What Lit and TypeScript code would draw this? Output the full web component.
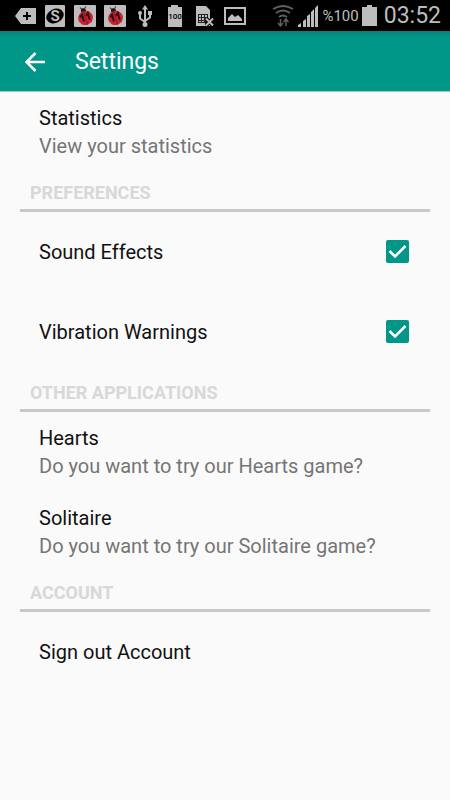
import { LitElement, html, css, svg, nothing } from "lit";
import { customElement, property, state } from "lit/decorators.js";

interface Item {
  title: string;
  summary?: string;
  setting?: "sound" | "vibration";
}

interface Section {
  heading?: string;
  items: Item[];
}

const SECTIONS: Section[] = [
  { items: [{ title: "Statistics", summary: "View your statistics" }] },
  {
    heading: "PREFERENCES",
    items: [
      { title: "Sound Effects", setting: "sound" },
      { title: "Vibration Warnings", setting: "vibration" },
    ],
  },
  {
    heading: "OTHER APPLICATIONS",
    items: [
      { title: "Hearts", summary: "Do you want to try our Hearts game?" },
      { title: "Solitaire", summary: "Do you want to try our Solitaire game?" },
    ],
  },
  { heading: "ACCOUNT", items: [{ title: "Sign out Account" }] },
];

const bug = svg`
  <rect width="22" height="22" rx="1" fill="#bdbdbd"/>
  <g transform="rotate(-16 11 11)">
    <path d="M10 4L8.500 1.500M12.500 4l2-2" stroke="#333" stroke-width="1" fill="none"/>
    <circle cx="11" cy="5.500" r="2.500" fill="#1c1a1c"/>
    <ellipse cx="11" cy="13" rx="7.500" ry="7" fill="#cb2130"/>
    <path d="M11 6v14" stroke="#8f1620" stroke-width="1"/>
    <path d="M6 11l2.500-2v7M12 11l2.500-2v7" stroke="#2a1416" stroke-width="2" fill="none"/>
  </g>`;

/* The notification and system icons along the top of the screen. */
@customElement("status-bar")
export class StatusBar extends LitElement {
  static styles = css`
    :host {
      display: flex;
      align-items: center;
      justify-content: space-between;
      height: 31px;
      padding: 0 9px 0 15px;
      background: #000;
      color: #bdbdbd;
      font-family: Roboto, "Noto Sans", sans-serif;
    }
    .group {
      display: flex;
      align-items: center;
      gap: 8px;
    }
    .system {
      gap: 3px;
    }
    svg {
      display: block;
      flex: none;
    }
    .level {
      font-size: 15px;
      line-height: 20px;
    }
    .clock {
      font-size: 23px;
      line-height: 28px;
      margin-left: 4px;
    }
    .small {
      font: 500 8px Roboto, sans-serif;
    }
    .letter {
      font: 700 15px Roboto, sans-serif;
    }
  `;

  render() {
    return html`
      <div class="group">
        <svg width="22" height="22" viewBox="0 0 22 22" aria-hidden="true">
          <path d="M0 11l6-8h15v16H6z" fill="#bdbdbd"/>
          <path d="M12 7v8M8 11h8" stroke="#000" stroke-width="2"/>
        </svg>
        <svg width="21" height="22" viewBox="0 0 21 22" aria-hidden="true">
          <rect width="20" height="22" rx="1" fill="#bdbdbd"/>
          <ellipse cx="10" cy="11" rx="9" ry="7" transform="rotate(-25 10 11)" fill="#000"/>
          <text class="letter" x="10" y="16" text-anchor="middle" fill="#bdbdbd">S</text>
        </svg>
        <svg width="22" height="22" viewBox="0 0 22 22" aria-hidden="true">${bug}</svg>
        <svg width="22" height="22" viewBox="0 0 22 22" aria-hidden="true">${bug}</svg>
        <svg width="22" height="22" viewBox="0 0 22 22" aria-hidden="true">
          <path d="M11 3v17M11 17L6 13.500V8M11 16L16 12.500V8" fill="none" stroke="#bdbdbd" stroke-width="2"/>
          <path d="M11 0l3 4.500H8z" fill="#bdbdbd"/>
          <circle cx="11" cy="19.500" r="2.500" fill="#bdbdbd"/>
          <circle cx="6" cy="8" r="2" fill="#bdbdbd"/>
          <path d="M14 6h4v4h-4z" fill="#bdbdbd"/>
        </svg>
        <svg width="22" height="22" viewBox="0 0 22 22" aria-hidden="true">
          <path d="M7 0h7v2h4v20H4V2h3z" fill="#bdbdbd"/>
          <text class="small" x="11" y="14" text-anchor="middle" fill="#000">100</text>
        </svg>
        <svg width="22" height="22" viewBox="0 0 22 22" aria-hidden="true">
          <path d="M2 1h10l4 4v16H2z" fill="#bdbdbd"/>
          <path d="M4 9h10v9H4z" fill="#222"/>
          <path d="M5 10h2v2H5zM8 10h2v2H8zM11 10h2v2h-2zM5 13h2v2H5zM8 13h2v2H8zM5 16h2v1H5zM8 16h2v1H8z" fill="#bdbdbd"/>
          <path d="M12 13.500l7 7M19 13.500l-7 7" stroke="#000" stroke-width="4"/>
          <path d="M12 13.500l7 7M19 13.500l-7 7" stroke="#bdbdbd" stroke-width="2"/>
        </svg>
        <svg width="22" height="22" viewBox="0 0 22 22" aria-hidden="true">
          <path d="M1 3h20v16H1z" fill="none" stroke="#bdbdbd" stroke-width="2"/>
          <path d="M4 16v-3l4-4 3 3 3-2 4 4v2z" fill="#bdbdbd"/>
        </svg>
      </div>
      <div class="group system">
        <svg width="22" height="22" viewBox="0 0 22 22" aria-hidden="true">
          <path d="M1 4q10-6 20 0M4 8q7-5 14 0M7 12q4-3 8 0" fill="none" stroke="#606060" stroke-width="2"/>
          <path d="M8.500 14v7M6 18l2.500 3 2.500-3M14 21v-7M11.500 17l2.500-3 2.500 3" fill="none" stroke="#606060" stroke-width="1.500"/>
        </svg>
        <svg width="22" height="22" viewBox="0 0 22 22" aria-hidden="true">
          <path d="M1 20l3-2v4H1zM6 16l3-2v8H6zM10 11l3-2v13h-3zM14 7l3-3v18h-3zM18 3l3-3v22h-3z" fill="#bdbdbd"/>
        </svg>
        <span class="level">%100</span>
        <svg width="15" height="22" viewBox="0 0 15 22" aria-hidden="true">
          <path d="M5 0h5v2h5v19H0V2h5z" fill="#bdbdbd"/>
        </svg>
        <span class="clock">03:52</span>
      </div>
    `;
  }
}

/* One line of the settings list: plain, with a summary, or with a tick box. */
@customElement("settings-row")
export class SettingsRow extends LitElement {
  @property() title = "";
  @property() summary = "";
  @property({ type: Boolean }) checkable = false;
  @property({ type: Boolean }) checked = false;

  static styles = css`
    :host {
      display: block;
    }
    .row {
      box-sizing: border-box;
      display: flex;
      align-items: center;
      justify-content: space-between;
      width: 100%;
      min-height: 80px;
      padding: 0 41px 0 39px;
      border: 0;
      background: none;
      color: #111;
      text-align: left;
      font: 20px/28px Roboto, "Noto Sans", sans-serif;
    }
    .title,
    .summary {
      display: block;
    }
    .summary {
      color: #757575;
    }
    .box {
      appearance: none;
      box-sizing: border-box;
      width: 23px;
      height: 23px;
      margin: 0;
      border: 2px solid #757575;
      border-radius: 2px;
    }
    .tick {
      display: grid;
      place-items: center;
      padding-bottom: 1px;
    }
    .tick > * {
      grid-area: 1 / 1;
    }
    .box:checked {
      border-color: #009688;
      background: #009688;
    }
    .box:not(:checked) + .mark {
      display: none;
    }
    .mark {
      pointer-events: none;
    }
  `;

  private toggle(event: Event) {
    this.checked = (event.target as HTMLInputElement).checked;
  }

  render() {
    if (this.checkable) {
      return html`
        <label class="row">
          <span class="title">${this.title}</span>
          <span class="tick">
            <input class="box" type="checkbox" .checked=${this.checked} @change=${this.toggle} />
            <svg class="mark" width="23" height="23" viewBox="0 0 23 23" aria-hidden="true">
              <path d="M3.500 11l5.500 5.500L19.500 6" fill="none" stroke="#fff" stroke-width="2.500"/>
            </svg>
          </span>
        </label>
      `;
    }
    return html`
      <button class="row" type="button">
        <span>
          <span class="title">${this.title}</span>
          ${this.summary ? html`<span class="summary">${this.summary}</span>` : nothing}
        </span>
      </button>
    `;
  }
}

@customElement("app-root")
export class AppRoot extends LitElement {
  @state() private sections = SECTIONS;

  static styles = css`
    :host {
      display: block;
      min-height: 100vh;
      background: #fafafa;
      font-family: Roboto, "Noto Sans", sans-serif;
    }
    .bar {
      box-sizing: border-box;
      display: flex;
      align-items: center;
      gap: 25px;
      height: 61px;
      padding: 2px 20px 0;
      border-bottom: 1px solid #8fcfc8;
      background: linear-gradient(#058377, #009688 6px);
      color: #fff;
    }
    .back {
      display: grid;
      place-items: center;
      width: 30px;
      height: 30px;
      padding: 0;
      border: 0;
      background: none;
    }
    .name {
      margin: 0;
      font-size: 23px;
      font-weight: 400;
      line-height: 32px;
    }
    .heading {
      box-sizing: border-box;
      height: 40px;
      margin: 0 20px;
      padding: 6px 10px 0;
      border-bottom: 3px solid #c8c8c8;
      color: #d8d8d8;
      font-size: 18px;
      font-weight: 700;
      line-height: 30px;
    }
  `;

  render() {
    return html`
      <status-bar></status-bar>
      <header class="bar">
        <button class="back" type="button" aria-label="Back">
          <svg width="20" height="20" viewBox="0 0 20 20" aria-hidden="true">
            <path d="M20 10H2M10.500 1L1.500 10l9 9" fill="none" stroke="#fff" stroke-width="2.500"/>
          </svg>
        </button>
        <h1 class="name">Settings</h1>
      </header>
      <main>
        ${this.sections.map(
          (section) => html`
            <section>
              ${section.heading ? html`<h2 class="heading">${section.heading}</h2>` : nothing}
              ${section.items.map(
                (item) => html`
                  <settings-row
                    .title=${item.title}
                    .summary=${item.summary ?? ""}
                    .checkable=${!!item.setting}
                    .checked=${!!item.setting}
                  ></settings-row>
                `
              )}
            </section>
          `
        )}
      </main>
    `;
  }
}
